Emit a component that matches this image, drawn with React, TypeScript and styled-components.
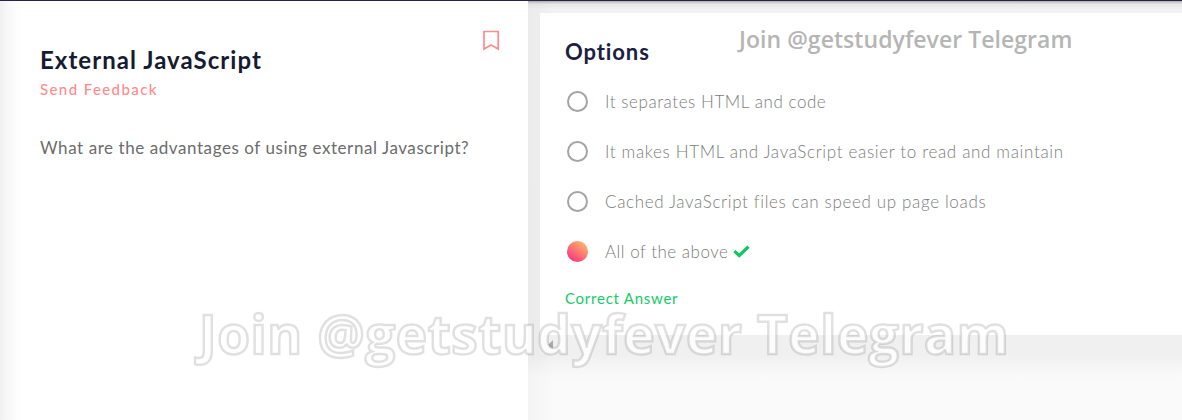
import React from "react";
import styled, { createGlobalStyle } from "styled-components";

const GlobalStyle = createGlobalStyle`
  * { box-sizing: border-box; }
  html, body, #root { margin: 0; height: 100%; }
  body {
    overflow: hidden;
    font-family: Lato, "Open Sans", sans-serif;
    background: #fff;
  }
`;

const Page = styled.main`
  position: relative;
  display: flex;
  height: 420px;
  width: 1182px;
  overflow: hidden;
  border-top: 1px solid #2b2144;
  background: #fafafa;
`;

const QuestionPanel = styled.section`
  display: flex;
  justify-content: space-between;
  width: 528px;
  flex: none;
  padding: 29px 28px 0 40px;
  background: linear-gradient(90deg, #f0f0f0 0, #f8f8f8 8px, #fdfdfd 17px, #fff 24px);
`;

const QuestionText = styled.div`
  display: flex;
  flex-direction: column;
  padding-top: 16px;
`;

const Line = styled.div<{ $size: number; $height: number; $spacing: number; $color: string; $weight?: number; $top?: number }>`
  font-size: ${(p) => p.$size}px;
  line-height: ${(p) => p.$height}px;
  letter-spacing: ${(p) => p.$spacing}px;
  color: ${(p) => p.$color};
  font-weight: ${(p) => p.$weight ?? 400};
  margin: ${(p) => p.$top ?? 0}px 0 0;
  white-space: nowrap;
`;

const BookmarkIcon = styled.svg`
  width: 17px;
  height: 21px;
  flex: none;
`;

const AnswerPanel = styled.section`
  flex: 1;
  min-width: 0;
  padding: 12px 0 0 12px;
  background:
    linear-gradient(180deg, rgba(60, 55, 70, 0.36) 0, rgba(120, 120, 120, 0.08) 3px, transparent 8px),
    linear-gradient(90deg, rgba(0, 0, 0, 0.025) 0, rgba(0, 0, 0, 0.015) 12px, transparent 26px),
    linear-gradient(180deg, #f1f1f1 0, #f0f0f0 354px, #f5f5f5 364px, #fafafa 378px);
`;

const Card = styled.div`
  height: 322px;
  padding: 25px 25px 0;
  background: #fff;
`;

const ScrollTrack = styled.div`
  display: flex;
  align-items: center;
  height: 20px;
  padding-left: 8px;
  background: #f0f0f0;
`;

const ScrollArrow = styled.svg`
  width: 6px;
  height: 10px;
`;

const OptionList = styled.ul`
  list-style: none;
  margin: 11px 0 0;
  padding: 0;
`;

const Option = styled.li`
  display: flex;
  align-items: center;
  height: 50px;
`;

const Radio = styled.span<{ $selected?: boolean }>`
  width: 21px;
  height: 21px;
  margin: 0 17px 2px 2px;
  flex: none;
  border-radius: 50%;
  border: ${(p) => (p.$selected ? "0" : "2px solid #a4a4a4")};
  background: ${(p) => (p.$selected ? "linear-gradient(37deg, #fa2e7d 8%, #fbbe6a 92%)" : "#fff")};
`;

const CheckIcon = styled.svg`
  width: 17px;
  height: 13px;
  margin: 0 0 1px 5px;
`;

const WatermarkSmall = styled.div`
  position: absolute;
  left: 739px;
  top: 22px;
  font: 600 23px/32px "Open Sans", sans-serif;
  letter-spacing: 0.05px;
  color: #b5b5b5;
  white-space: nowrap;
`;

const WatermarkLarge = styled.div`
  position: absolute;
  left: 199px;
  top: 297px;
  font: 700 53px/72px "Open Sans", sans-serif;
  letter-spacing: 0.6px;
  color: rgba(255, 255, 255, 0.8);
  -webkit-text-stroke: 2.5px rgba(0, 0, 0, 0.12);
  white-space: nowrap;
`;

const options = [
  { text: "It separates HTML and code", spacing: 0.56 },
  { text: "It makes HTML and JavaScript easier to read and maintain", spacing: 0.66 },
  { text: "Cached JavaScript files can speed up page loads", spacing: 0.65 },
  { text: "All of the above", spacing: 0.5, selected: true },
];

export default function App() {
  return (
    <>
      <GlobalStyle />
      <Page>
        <QuestionPanel>
          <QuestionText>
            <Line as="h1" $size={24} $height={28} $spacing={1.05} $color="#161b2f" $weight={700}>External JavaScript</Line>
            <Line $size={15} $height={20} $spacing={1.4} $color="#ff8c8c" $weight={500} $top={5}>Send Feedback</Line>
            <Line as="p" $size={17} $height={24} $spacing={0.57} $color="#6c6c6c" $top={37}>
              What are the advantages of using external Javascript?
            </Line>
          </QuestionText>
          <BookmarkIcon viewBox="0 0 17 21" fill="none" stroke="#ff8c8c" strokeWidth="1.7">
            <path d="M1 1.5H15.2V19L8.1 15L1 19Z" />
          </BookmarkIcon>
        </QuestionPanel>
        <AnswerPanel>
          <Card>
            <Line as="h2" $size={22} $height={28} $spacing={0.9} $color="#1b2040" $weight={700}>Options</Line>
            <OptionList>
              {options.map((o) => (
                <Option key={o.text}>
                  <Radio $selected={o.selected} />
                  <Line $size={17} $height={24} $spacing={o.spacing} $color="#7c7c7c" $weight={300}>{o.text}</Line>
                  {o.selected && (
                    <CheckIcon viewBox="0 0 17 13" fill="none" stroke="#07c95c" strokeWidth="3.2">
                      <path d="M1.5 6.2L6.2 10.6L15.5 1.6" />
                    </CheckIcon>
                  )}
                </Option>
              ))}
            </OptionList>
            <Line $size={15} $height={20} $spacing={0.75} $color="#12cc68" $top={11}>Correct Answer</Line>
          </Card>
          <ScrollTrack>
            <ScrollArrow viewBox="0 0 6 10"><path d="M0 5L5 0V10Z" fill="#aaa" /></ScrollArrow>
          </ScrollTrack>
        </AnswerPanel>
        <WatermarkSmall>Join @getstudyfever Telegram</WatermarkSmall>
        <WatermarkLarge>Join @getstudyfever Telegram</WatermarkLarge>
      </Page>
    </>
  );
}
